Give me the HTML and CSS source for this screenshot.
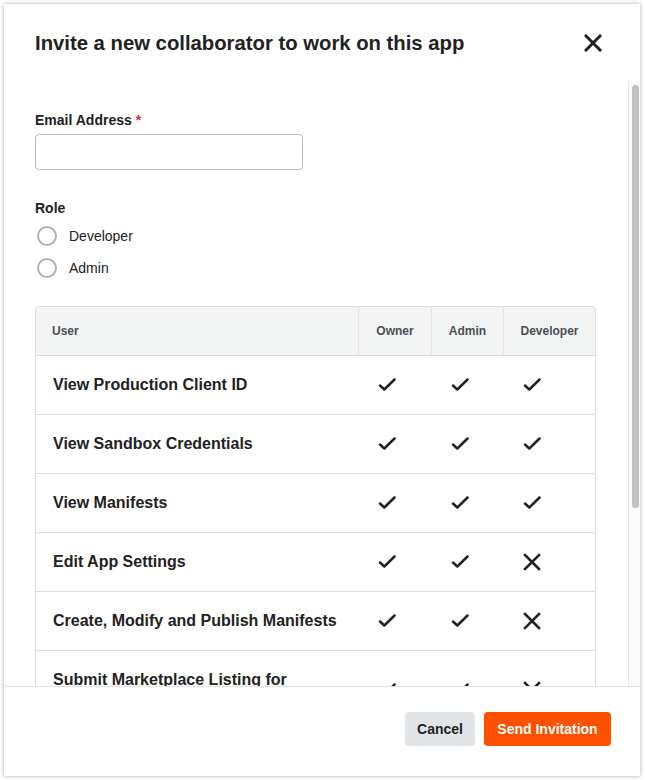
FILE: index.html
```html
<!DOCTYPE html>
<html lang="en">
<head>
<meta charset="utf-8">
<title>Invite collaborator</title>
<link rel="stylesheet" href="styles.css">
</head>
<body>
<div class="dialog">
  <header class="dialog-header">
    <h1 class="dialog-title">Invite a new collaborator to work on this app</h1>
    <button class="close-btn" aria-label="Close">
      <svg width="18" height="18" viewBox="0 0 18 18"><path d="M2 2L16 16M16 2L2 16" stroke="#222" stroke-width="3" stroke-linecap="square" fill="none"/></svg>
    </button>
  </header>
  <div class="dialog-main">
    <div class="dialog-body">
      <label class="field-label" for="email">Email Address <span class="req">*</span></label>
      <input class="text-input" id="email" type="email">
      <div class="field-label role-label">Role</div>
      <div class="radio-list">
        <label class="radio-row"><span class="radio"></span>Developer</label>
        <label class="radio-row"><span class="radio"></span>Admin</label>
      </div>
      <table class="perm-table">
        <colgroup><col class="c-user"><col class="c-owner"><col class="c-admin"><col class="c-dev"></colgroup>
        <thead>
          <tr><th class="col-user">User</th><th>Owner</th><th>Admin</th><th>Developer</th></tr>
        </thead>
        <tbody>
          <tr><td class="perm">View Production Client ID</td><td><i class="ic ok"></i></td><td><i class="ic ok"></i></td><td><i class="ic ok"></i></td></tr>
          <tr><td class="perm">View Sandbox Credentials</td><td><i class="ic ok"></i></td><td><i class="ic ok"></i></td><td><i class="ic ok"></i></td></tr>
          <tr><td class="perm">View Manifests</td><td><i class="ic ok"></i></td><td><i class="ic ok"></i></td><td><i class="ic ok"></i></td></tr>
          <tr><td class="perm">Edit App Settings</td><td><i class="ic ok"></i></td><td><i class="ic ok"></i></td><td><i class="ic no"></i></td></tr>
          <tr><td class="perm">Create, Modify and Publish Manifests</td><td><i class="ic ok"></i></td><td><i class="ic ok"></i></td><td><i class="ic no"></i></td></tr>
          <tr><td class="perm">Submit Marketplace Listing for Review</td><td><i class="ic ok"></i></td><td><i class="ic ok"></i></td><td><i class="ic no"></i></td></tr>
          <tr><td class="perm">Manage Collaborators</td><td><i class="ic ok"></i></td><td><i class="ic ok"></i></td><td><i class="ic no"></i></td></tr>
          <tr><td class="perm">Transfer App Ownership</td><td><i class="ic ok"></i></td><td><i class="ic no"></i></td><td><i class="ic no"></i></td></tr>
          <tr><td class="perm">Delete App</td><td><i class="ic ok"></i></td><td><i class="ic no"></i></td><td><i class="ic no"></i></td></tr>
        </tbody>
      </table>
    </div>
    <div class="scrollbar" aria-hidden="true"><div class="scroll-thumb"></div></div>
  </div>
  <footer class="dialog-footer">
    <button class="btn btn-secondary">Cancel</button>
    <button class="btn btn-primary">Send Invitation</button>
  </footer>
</div>
</body>
</html>
```

FILE: styles.css
```css
* { box-sizing: border-box; }
html, body { margin: 0; background: #fff; }
body {
  padding: 4px 5px 4px 4px;
  font-family: "Liberation Sans", Arial, sans-serif;
  color: #222;
}
.dialog {
  height: 772px;
  background: #fff;
  box-shadow: 0 0 4px rgba(0,0,0,0.35);
  display: flex;
  flex-direction: column;
}
.dialog-header {
  height: 77px;
  flex: none;
  display: flex;
  align-items: flex-start;
  justify-content: space-between;
  padding: 27px 38px 0 31px;
}
.dialog-title {
  margin: 0;
  font-size: 20.3px;
  line-height: 24px;
  font-weight: 700;
  color: #222;
}
.close-btn {
  border: 0;
  background: none;
  padding: 0;
  margin-top: 3px;
  width: 18px;
  height: 18px;
  display: block;
}
.close-btn svg { display: block; }
.dialog-main {
  flex: 1;
  min-height: 0;
  display: flex;
}
.dialog-body {
  flex: 1;
  min-width: 0;
  overflow: hidden;
  padding: 29px 32px 30px 31px;
}
.scrollbar {
  flex: none;
  width: 12px;
  background: #fafafa;
  border-left: 1px solid #e6e6e6;
  padding: 4px 1px 0 3px;
}
.scroll-thumb {
  height: 423px;
  background: #c2c2c2;
  border-radius: 4px;
}
.field-label {
  display: block;
  font-size: 14px;
  line-height: 20px;
  font-weight: 700;
  color: #222;
}
.req { color: #e0262b; }
.text-input {
  display: block;
  margin-top: 4px;
  width: 268px;
  height: 36px;
  border: 1px solid #b9bec3;
  border-radius: 4px;
  background: #fff;
}
.role-label { margin-top: 28px; }
.radio-list {
  display: flex;
  flex-direction: column;
  gap: 8px;
  margin-top: 6px;
}
.radio-row {
  display: flex;
  align-items: center;
  height: 24px;
  font-size: 14px;
  color: #222;
}
.radio {
  width: 20px;
  height: 20px;
  border: 2px solid #aeb2b6;
  border-radius: 50%;
  margin: 0 12px 0 2px;
  flex: none;
}
.perm-table {
  margin-top: 26px;
  width: 561px;
  table-layout: fixed;
  border-collapse: separate;
  border-spacing: 0;
  border: 1px solid #dcdcdc;
  border-radius: 4px;
}
.c-user { width: 322px; }
.c-owner { width: 73px; }
.c-admin { width: 72px; }
.c-dev { width: 92px; }
.perm-table th {
  background: #f3f4f4;
  height: 49px;
  font-size: 12px;
  font-weight: 700;
  color: #4b4f53;
  text-align: center;
  padding: 0;
  border-bottom: 1px solid #dcdcdc;
}
.perm-table th + th { border-left: 1px solid #e3e3e3; }
.perm-table th:first-child { border-top-left-radius: 4px; }
.perm-table th:last-child { border-top-right-radius: 4px; }
.perm-table th.col-user { text-align: left; padding-left: 16px; }
.perm-table td {
  height: 58px;
  text-align: left;
  border-bottom: 1px solid #dcdcdc;
  padding: 0 0 0 20px;
}
.perm-table tr:last-child td { border-bottom: 0; }
.perm-table td.perm {
  padding: 19px 14px 19px 17px;
  font-size: 16px;
  line-height: 20px;
  font-weight: 700;
  color: #222;
}
.ic {
  display: inline-block;
  width: 18px;
  height: 18px;
  vertical-align: middle;
  background-repeat: no-repeat;
  background-position: center;
}
.ic.ok {
  background-image: url("data:image/svg+xml,%3Csvg xmlns='http://www.w3.org/2000/svg' width='18' height='18' viewBox='0 0 18 18'%3E%3Cpath d='M2 9.5L6.3 13.5L16.5 3.5' stroke='%23222' stroke-width='2.5' fill='none' stroke-linecap='round' stroke-linejoin='round'/%3E%3C/svg%3E");
}
.ic.no {
  background-image: url("data:image/svg+xml,%3Csvg xmlns='http://www.w3.org/2000/svg' width='18' height='18' viewBox='0 0 18 18'%3E%3Cpath d='M2 2L16 16M16 2L2 16' stroke='%23222' stroke-width='2.6' fill='none' stroke-linecap='square'/%3E%3C/svg%3E");
}
.dialog-footer {
  height: 90px;
  flex: none;
  border-top: 1px solid #e3e3e3;
  display: flex;
  justify-content: flex-end;
  align-items: flex-start;
  gap: 9px;
  padding: 25px 29px 0 0;
}
.btn {
  height: 34px;
  border: 0;
  border-radius: 4px;
  font-family: inherit;
  font-size: 14px;
  font-weight: 700;
  padding: 0 12px;
}
.btn-secondary { background: #e2e5e7; color: #222; width: 70px; }
.btn-primary { background: #ff5000; color: #fff; width: 127px; }
```
